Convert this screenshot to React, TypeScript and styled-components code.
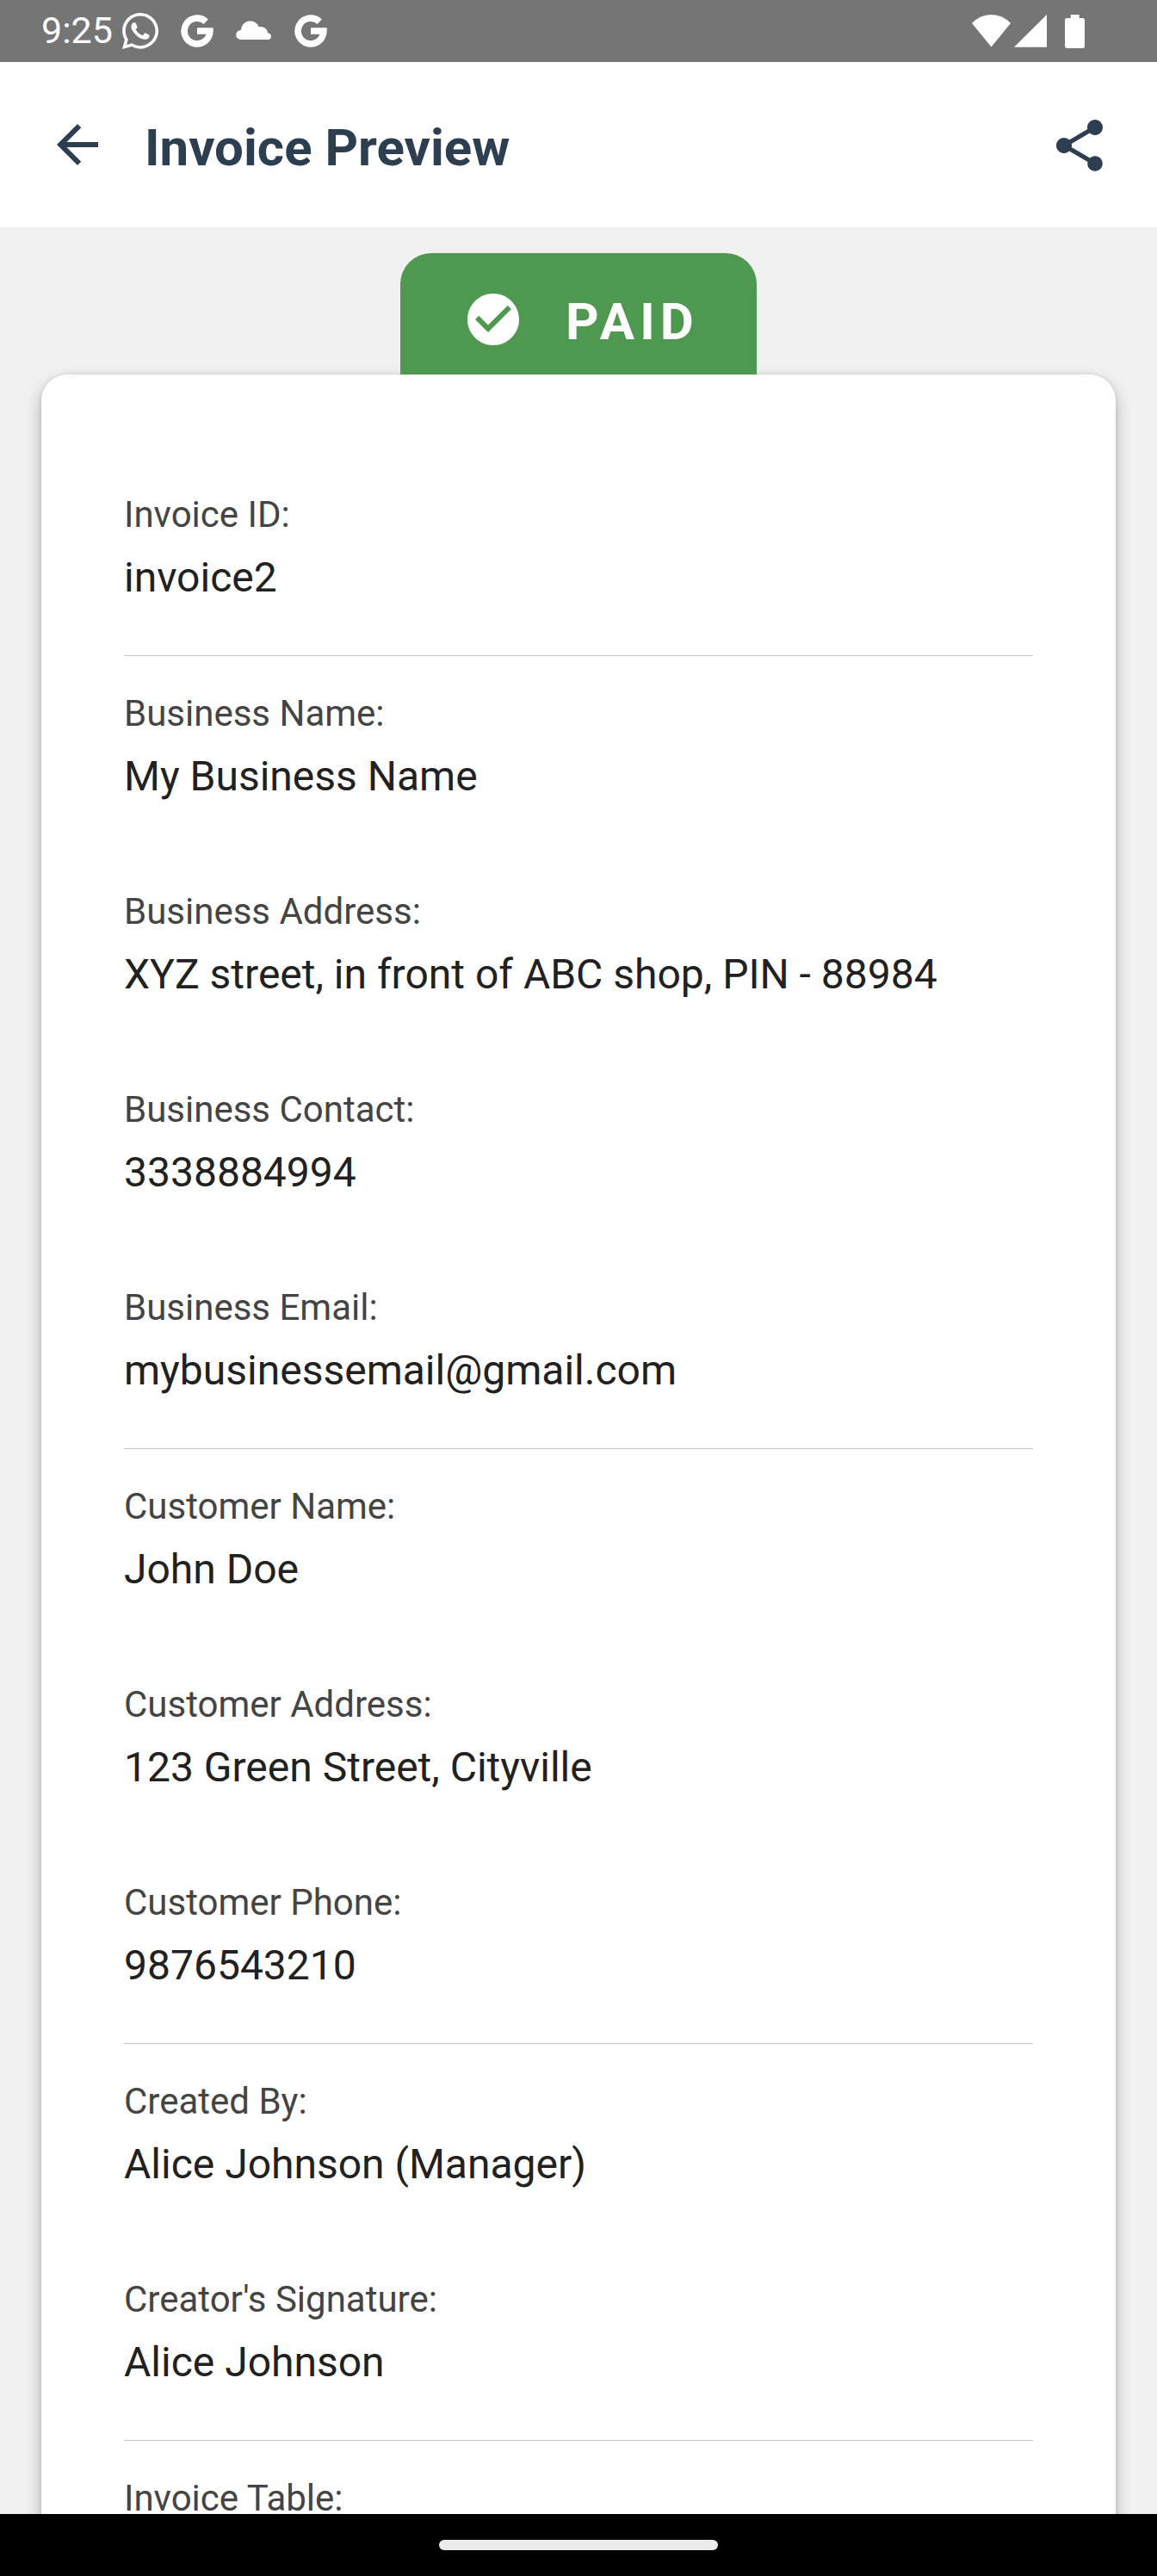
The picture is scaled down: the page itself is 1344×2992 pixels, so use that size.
import React from "react";
import styled, { createGlobalStyle } from "styled-components";
import { MdArrowBack, MdCheckCircle, MdShare } from "react-icons/md";
import { FaWhatsapp } from "react-icons/fa";

const GlobalStyle = createGlobalStyle`
  html, body { margin: 0; padding: 0; background: #f1f1f1; }
  *, *::before, *::after { box-sizing: border-box; }
`;

const Screen = styled.div`
  width: 1344px;
  height: 2992px;
  display: flex;
  flex-direction: column;
  overflow: hidden;
  background: #f1f1f1;
  font-family: Roboto, "Liberation Sans", sans-serif;
`;

const StatusBar = styled.header`
  flex: none;
  height: 72px;
  display: flex;
  align-items: center;
  justify-content: space-between;
  padding: 0 84px 0 48px;
  background: #757575;
  color: #fff;
`;

const StatusGroup = styled.div`
  display: flex;
  align-items: center;
`;

const Clock = styled.span`
  width: 94px;
  margin-bottom: 2px;
  font-size: 43px;
  line-height: 70px;
  white-space: nowrap;
`;

const StatusIcon = styled.svg<{ $gap: number }>`
  display: block;
  flex: none;
  margin-left: ${(p) => p.$gap}px;
`;

const WhatsAppIcon = styled(FaWhatsapp)`
  display: block;
  width: 42px;
  height: 48px;
`;

const AppBar = styled.div`
  flex: none;
  height: 192px;
  display: flex;
  align-items: center;
  padding: 0 54px;
  background: #fff;
  color: #2c3e50;
`;

const IconButton = styled.button<{ $drop?: number }>`
  display: flex;
  padding: ${(p) => p.$drop ?? 0}px 0 0;
  border: 0;
  background: none;
  color: inherit;
  font-size: 72px;
`;

const Title = styled.h1`
  flex: 1;
  margin: 8px 0 0 42px;
  font-size: 60px;
  line-height: 72px;
  font-weight: 700;
`;

const Content = styled.main`
  flex: 1;
  min-height: 0;
  overflow: hidden;
  display: flex;
  flex-direction: column;
  align-items: center;
  padding: 30px 48px 0;
`;

const Badge = styled.div`
  flex: none;
  position: relative;
  z-index: 1;
  width: 414px;
  height: 141px;
  display: flex;
  align-items: center;
  gap: 48px;
  padding: 13px 0 0 72px;
  border-radius: 36px 36px 0 0;
  background: #4e994f;
  color: #fff;
`;

const BadgeIcon = styled(MdCheckCircle)`
  flex: none;
  width: 72px;
  height: 72px;
`;

const BadgeText = styled.span`
  font-size: 60px;
  line-height: 72px;
  font-weight: 700;
  letter-spacing: 6px;
  margin-top: 5px;
`;

const Card = styled.section`
  flex: none;
  width: 100%;
  height: 2700px;
  padding: 96px;
  border-radius: 30px;
  background: #fff;
  box-shadow: 0 9px 20px -1px rgba(0, 0, 0, 0.3), 0 0 5px rgba(0, 0, 0, 0.1);
`;

const Section = styled.div`
  & + & {
    border-top: 1px solid #c6c5cf;
  }
`;

const Field = styled.div`
  height: 230px;
  padding-top: 37px;
  display: flex;
  flex-direction: column;
  gap: 7px;
  white-space: nowrap;
`;

const Label = styled.div`
  font-size: 42px;
  line-height: 60px;
  color: #444;
`;

const Value = styled.div`
  font-size: 48px;
  line-height: 72px;
  color: #212121;
`;

const NavBar = styled.footer`
  flex: none;
  height: 72px;
  display: flex;
  align-items: center;
  justify-content: center;
  background: #000;
`;

const Handle = styled.div`
  width: 324px;
  height: 12px;
  border-radius: 6px;
  background: #ebebeb;
`;

const GoogleIcon = ({ gap }: { gap: number }) => (
  <StatusIcon $gap={gap} width="38" height="38" viewBox="0 0 38 38">
    <path
      d="M29.2 8.2A14.9 14.9 0 1 0 33.9 19H19"
      fill="none"
      stroke="#fff"
      strokeWidth="7.6"
    />
  </StatusIcon>
);

const CloudIcon = () => (
  <StatusIcon $gap={26} width="42" height="26" viewBox="0 0 42 26" fill="#fff">
    <path d="M5.6 23A5.5 5.5 0 0 1 5.8 12A10.9 10.9 0 0 1 26.8 8.2A8.6 8.6 0 0 1 37.3 15.5A3.8 3.8 0 0 1 38 23Z" />
  </StatusIcon>
);

const sections: [string, string][][] = [
  [["Invoice ID:", "invoice2"]],
  [
    ["Business Name:", "My Business Name"],
    ["Business Address:", "XYZ street, in front of ABC shop, PIN - 88984"],
    ["Business Contact:", "3338884994"],
    ["Business Email:", "mybusinessemail@gmail.com"],
  ],
  [
    ["Customer Name:", "John Doe"],
    ["Customer Address:", "123 Green Street, Cityville"],
    ["Customer Phone:", "9876543210"],
  ],
  [
    ["Created By:", "Alice Johnson (Manager)"],
    ["Creator's Signature:", "Alice Johnson"],
  ],
  [["Invoice Table:", ""]],
];

export default function App() {
  return (
    <Screen>
      <GlobalStyle />
      <StatusBar>
        <StatusGroup>
          <Clock>9:25</Clock>
          <WhatsAppIcon />
          <GoogleIcon gap={26} />
          <CloudIcon />
          <GoogleIcon gap={26} />
        </StatusGroup>
        <StatusGroup>
          <StatusIcon $gap={0} width="45" height="38" viewBox="0 0 45 38" fill="#fff">
            <path d="M0 10Q9.5 0 22.5 0T45 10L22.5 37.5Z" />
          </StatusIcon>
          <StatusIcon $gap={4} width="38" height="38" viewBox="0 0 38 38" fill="#fff">
            <path d="M38 0V37.7H0Z" />
          </StatusIcon>
          <StatusIcon $gap={21} width="23" height="39" viewBox="0 0 23 39" fill="#fff">
            <path d="M6.7 0H16.7V4H20.5A2.5 2.5 0 0 1 23 6.5V36.5A2.5 2.5 0 0 1 20.5 39H2.5A2.5 2.5 0 0 1 0 36.5V6.5A2.5 2.5 0 0 1 2.5 4H6.7Z" />
          </StatusIcon>
        </StatusGroup>
      </StatusBar>
      <AppBar>
        <IconButton aria-label="Back">
          <MdArrowBack />
        </IconButton>
        <Title>Invoice Preview</Title>
        <IconButton aria-label="Share" $drop={2}>
          <MdShare />
        </IconButton>
      </AppBar>
      <Content>
        <Badge>
          <BadgeIcon />
          <BadgeText>PAID</BadgeText>
        </Badge>
        <Card>
          {sections.map((fields) => (
            <Section key={fields[0][0]}>
              {fields.map(([label, value]) => (
                <Field key={label}>
                  <Label>{label}</Label>
                  {value && <Value>{value}</Value>}
                </Field>
              ))}
            </Section>
          ))}
        </Card>
      </Content>
      <NavBar>
        <Handle />
      </NavBar>
    </Screen>
  );
}
